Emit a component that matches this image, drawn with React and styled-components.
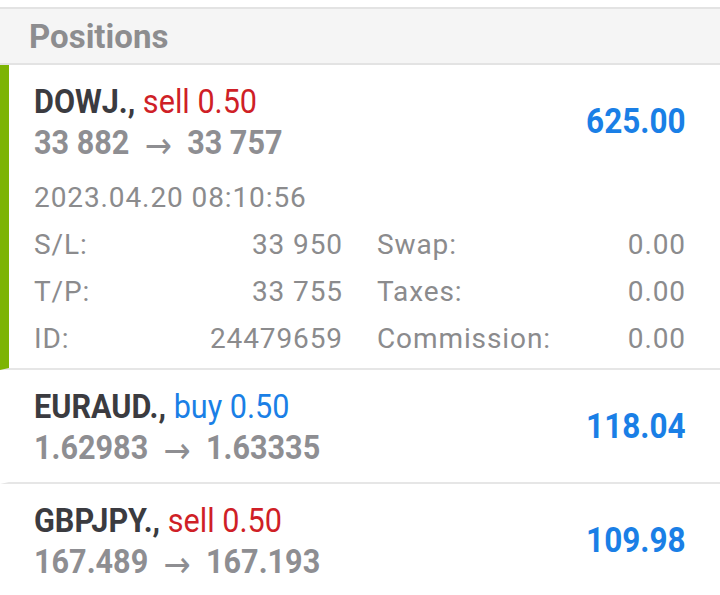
import styled, { createGlobalStyle } from "styled-components";

const GlobalStyle = createGlobalStyle`
  html, body {
    margin: 0;
    padding: 0;
    background: #ffffff;
  }
  body {
    font-family: Roboto, "Liberation Sans", sans-serif;
    -webkit-font-smoothing: antialiased;
  }
`;

const Page = styled.div`
  width: 720px;
  padding-top: 7px;
`;

const Header = styled.div`
  height: 54px;
  display: flex;
  align-items: center;
  padding-left: 29px;
  background: #f5f5f5;
  border-top: 2px solid #e3e3e3;
  border-bottom: 2px solid #e3e3e3;
  font-size: 33px;
  font-weight: 700;
  color: #8d8d8f;
`;

const Item = styled.div`
  display: flex;
  flex-direction: column;
  padding: 16px 34px ${(p) => (p.$open ? "6px" : "16px")} 25px;
  border-left: 9px solid ${(p) => (p.$open ? "#7db404" : "transparent")};
  border-bottom: 2px solid #e6e6e6;
`;

const Top = styled.div`
  display: flex;
  align-items: center;
  justify-content: space-between;
`;

const Lines = styled.div`
  display: flex;
  flex-direction: column;
`;

const Line = styled.div`
  height: 40px;
  line-height: 40px;
  font-size: 34px;
  white-space: nowrap;
`;

/* narrow face for symbol, price and profit text */
const Cond = styled.span`
  display: inline-block;
  transform: scaleX(0.9);
  transform-origin: ${(p) => (p.$right ? "right" : "left")} center;
`;

const Symbol = styled.span`
  font-weight: 700;
  color: #3b3b40;
`;

const Side = styled.span`
  font-weight: 400;
  color: ${(p) => (p.$type === "buy" ? "#1a7fe6" : "#cf1f27")};
`;

const Price = styled.span`
  font-weight: 700;
  color: #8e8e92;
`;

const Arrow = styled.span`
  display: inline-block;
  font-family: "Noto Sans", "DejaVu Sans", sans-serif;
  font-weight: 400;
  font-size: 36px;
  transform: translateY(4px);
  margin: 0 17px;
`;

const Profit = styled.div`
  font-size: 35px;
  font-weight: 700;
  color: #1a7fe6;
`;

const Date = styled.div`
  margin-top: 13px;
  font-size: 28px;
  letter-spacing: 0.9px;
  line-height: 47px;
  color: #8b8b8d;
`;

const Details = styled.div`
  display: grid;
  grid-template-columns: 1fr 1fr;
  column-gap: 34px;
`;

const Field = styled.div`
  display: flex;
  justify-content: space-between;
  font-size: 28px;
  letter-spacing: 0.9px;
  line-height: 47px;
  color: #8b8b8d;
`;

const positions = [
  {
    symbol: "DOWJ.",
    type: "sell",
    volume: "0.50",
    open: "33 882",
    current: "33 757",
    profit: "625.00",
    expanded: true,
    time: "2023.04.20 08:10:56",
    fields: [
      ["S/L:", "33 950"],
      ["Swap:", "0.00"],
      ["T/P:", "33 755"],
      ["Taxes:", "0.00"],
      ["ID:", "24479659"],
      ["Commission:", "0.00"],
    ],
  },
  {
    symbol: "EURAUD.",
    type: "buy",
    volume: "0.50",
    open: "1.62983",
    current: "1.63335",
    profit: "118.04",
  },
  {
    symbol: "GBPJPY.",
    type: "sell",
    volume: "0.50",
    open: "167.489",
    current: "167.193",
    profit: "109.98",
  },
];

const PositionItem = ({ pos }) => (
  <Item $open={pos.expanded}>
    <Top>
      <Lines>
        <Line>
          <Cond>
            <Symbol>{pos.symbol},</Symbol>{" "}
            <Side $type={pos.type}>
              {pos.type} {pos.volume}
            </Side>
          </Cond>
        </Line>
        <Line>
          <Cond>
            <Price>
              {pos.open}
              <Arrow>→</Arrow>
              {pos.current}
            </Price>
          </Cond>
        </Line>
      </Lines>
      <Profit>
        <Cond $right>{pos.profit}</Cond>
      </Profit>
    </Top>
    {pos.expanded && (
      <>
        <Date>{pos.time}</Date>
        <Details>
          {pos.fields.map(([label, value]) => (
            <Field key={label}>
              <span>{label}</span>
              <span>{value}</span>
            </Field>
          ))}
        </Details>
      </>
    )}
  </Item>
);

export default function App() {
  return (
    <>
      <GlobalStyle />
      <Page>
        <Header>Positions</Header>
        {positions.map((pos) => (
          <PositionItem key={pos.symbol} pos={pos} />
        ))}
      </Page>
    </>
  );
}
